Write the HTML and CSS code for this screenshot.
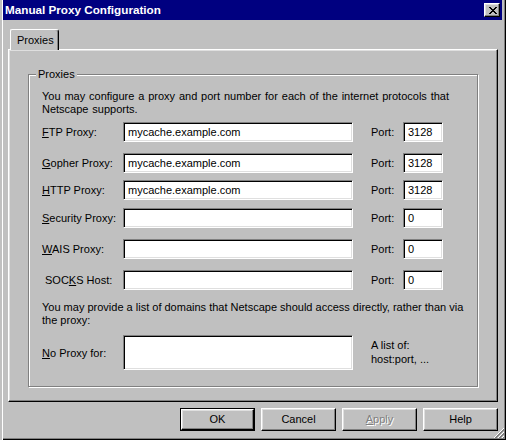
FILE: index.html
```html
<!DOCTYPE html>
<html>
<head>
<meta charset="utf-8">
<link rel="stylesheet" href="styles.css">
</head>
<body>
<div class="window">
  <div class="titlebar">
    <span class="title">Manual Proxy Configuration</span>
    <span class="close">
      <svg width="8" height="7" viewBox="0 0 8 7"><path d="M0 0h2v1h-2zM6 0h2v1h-2zM1 1h2v1h-2zM5 1h2v1h-2zM2 2h4v1h-4zM3 3h2v1h-2zM2 4h4v1h-4zM1 5h2v1h-2zM5 5h2v1h-2zM0 6h2v1h-2zM6 6h2v1h-2z" fill="#000"/></svg>
    </span>
  </div>
  <div class="content">
    <div class="tabs"><div class="tab">Proxies</div></div>
    <div class="panel">
      <fieldset class="group">
        <legend>Proxies</legend>
        <p class="text intro">You may configure a proxy and port number for each of the internet protocols that<br>Netscape supports.</p>
        <div class="row first">
          <span class="label"><u>F</u>TP Proxy:</span>
          <span class="field host">mycache.example.com</span>
          <span class="plabel">Port:</span>
          <span class="field port">3128</span>
        </div>
        <div class="row wide">
          <span class="label"><u>G</u>opher Proxy:</span>
          <span class="field host">mycache.example.com</span>
          <span class="plabel">Port:</span>
          <span class="field port">3128</span>
        </div>
        <div class="row tight">
          <span class="label"><u>H</u>TTP Proxy:</span>
          <span class="field host">mycache.example.com</span>
          <span class="plabel">Port:</span>
          <span class="field port">3128</span>
        </div>
        <div class="row mid">
          <span class="label"><u>S</u>ecurity Proxy:</span>
          <span class="field host"></span>
          <span class="plabel">Port:</span>
          <span class="field port">0</span>
        </div>
        <div class="row wide">
          <span class="label"><u>W</u>AIS Proxy:</span>
          <span class="field host"></span>
          <span class="plabel">Port:</span>
          <span class="field port">0</span>
        </div>
        <div class="row wide">
          <span class="label indent">SOC<u>K</u>S Host:</span>
          <span class="field host"></span>
          <span class="plabel">Port:</span>
          <span class="field port">0</span>
        </div>
        <p class="text direct">You may provide a list of domains that Netscape should access directly, rather than via<br>the proxy:</p>
        <div class="row noproxy">
          <span class="label"><u>N</u>o Proxy for:</span>
          <span class="field host tall"></span>
          <span class="hint">A list of:<br>host:port, ...</span>
        </div>
      </fieldset>
    </div>
    <div class="buttons">
      <span class="btn default"><span class="btn-face">OK</span></span>
      <span class="btn"><span class="btn-face">Cancel</span></span>
      <span class="btn disabled"><span class="btn-face"><u>A</u>pply</span></span>
      <span class="btn"><span class="btn-face">Help</span></span>
    </div>
  </div>
  <svg class="grip" width="12" height="12" viewBox="0 0 12 12">
    <path d="M11 1L1 11M11 5L5 11M11 9L9 11" stroke="#fff" stroke-width="1"/>
    <path d="M11 2L2 11M11 3L3 11M11 6L6 11M11 7L7 11M11 10L10 11" stroke="#808080" stroke-width="1"/>
  </svg>
</div>
</body>
</html>
```

FILE: styles.css
```css
* { box-sizing: border-box; }
html, body {
  margin: 0;
  padding: 0;
  background: #c0c0c0;
}
body {
  width: 506px;
  height: 440px;
  overflow: hidden;
  font-family: "Liberation Sans", Arial, sans-serif;
  font-size: 11px;
  color: #000;
}
.window {
  position: relative;
  width: 506px;
  height: 440px;
  padding: 0 4px 4px 3px;
  background: #c0c0c0;
  box-shadow:
    inset 2px 0 0 #c0c0c0,
    inset 3px 0 0 #fff,
    inset -1px -1px 0 #000,
    inset -2px -2px 0 #808080;
}
.titlebar {
  height: 20px;
  background: #000080;
  display: flex;
  align-items: center;
  justify-content: space-between;
  padding: 0 2px 0 2px;
}
.title {
  color: #fff;
  font-weight: bold;
  font-size: 11.7px;
  line-height: 14px;
}
.close {
  width: 16px;
  height: 14px;
  background: #c0c0c0;
  border: 1px solid;
  border-color: #fff #000 #000 #fff;
  box-shadow: inset -1px -1px 0 #808080, inset 1px 1px 0 #dfdfdf;
  display: flex;
  align-items: center;
  justify-content: center;
  padding-left: 1px;
}
.close svg { display: block; }
.content {
  padding: 9px 4px 0 5px;
}
.tabs {
  display: flex;
  padding-left: 2px;
  position: relative;
  z-index: 1;
}
.tab {
  width: 49px;
  height: 21px;
  margin-bottom: -1px;
  background: #c0c0c0;
  border: 1px solid;
  border-color: #fff #000 transparent #fff;
  border-bottom: none;
  border-radius: 2px 3px 0 0;
  box-shadow: inset -1px 0 0 #808080;
  padding: 4px 0 0 6px;
  line-height: 13px;
}
.panel {
  height: 353px;
  border: 1px solid;
  border-color: #fff #000 #000 #fff;
  box-shadow: inset -1px -1px 0 #808080, inset 1px 1px 0 #dfdfdf;
  padding: 18px 19px 0 19px;
}
.group {
  margin: 0;
  padding: 0 0 16px 13px;
  border: 1px solid #808080;
  box-shadow: inset 1px 1px 0 #fff, 1px 1px 0 #fff;
  min-width: 0;
}
.group legend {
  margin-left: -6px;
  padding: 0 2px;
  line-height: 13px;
  background: #c0c0c0;
}
.text {
  margin: 0;
  line-height: 13px;
}
.intro { margin-top: 9px; word-spacing: 0.8px; }
.direct { margin-top: 11px; }
.row {
  display: flex;
  align-items: center;
  height: 20px;
  margin-top: 11px;
}
.row.first { margin-top: 6px; }
.row.tight { margin-top: 7px; }
.row.mid { margin-top: 8px; }
.row.noproxy {
  height: 35px;
  margin-top: 8px;
}
.label {
  width: 81px;
  flex: none;
  white-space: nowrap;
}
.label.indent { padding-left: 3px; }
.field {
  flex: none;
  height: 20px;
  background: #fff;
  border: 1px solid;
  border-color: #808080 #fff #fff #808080;
  box-shadow: inset 1px 1px 0 #000, inset -1px -1px 0 #dfdfdf;
  padding: 3px 0 0 4px;
  line-height: 13px;
  white-space: nowrap;
  overflow: hidden;
}
.field.host { width: 230px; }
.field.tall { height: 35px; }
.field.port { width: 40px; }
.plabel {
  flex: none;
  width: 32px;
  margin-left: 18px;
}
.hint {
  margin-left: 18px;
  line-height: 14px;
  margin-top: -2px;
}
.buttons {
  display: flex;
  justify-content: flex-end;
  gap: 6px;
  margin-top: 6px;
}
.btn {
  width: 75px;
  height: 23px;
  border: 1px solid;
  border-color: #fff #000 #000 #fff;
  box-shadow: inset -1px -1px 0 #808080, inset 1px 1px 0 #dfdfdf;
  display: flex;
}
.btn-face {
  flex: 1;
  display: flex;
  align-items: center;
  justify-content: center;
  font-size: 11px;
  line-height: 13px;
}
.btn.default {
  border: 1px solid #000;
  box-shadow: none;
}
.btn.default .btn-face {
  border: 1px solid;
  border-color: #fff #000 #000 #fff;
  box-shadow: inset -1px -1px 0 #808080, inset 1px 1px 0 #dfdfdf;
}
.btn.disabled .btn-face {
  color: #808080;
  text-shadow: 1px 1px 0 #fff;
}
.grip {
  position: absolute;
  right: 1px;
  bottom: 1px;
}
```
